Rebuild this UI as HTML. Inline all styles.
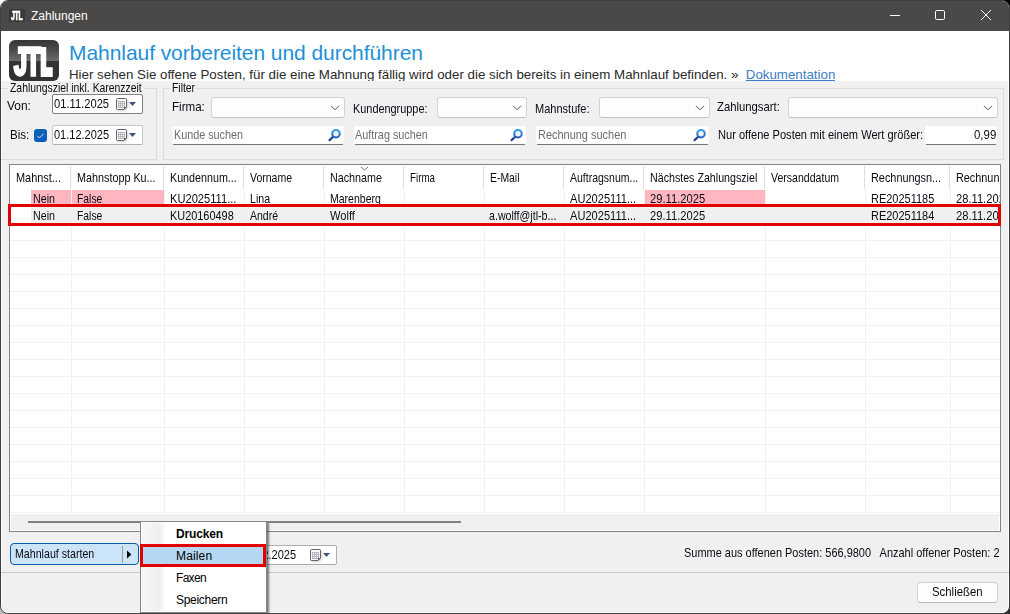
<!DOCTYPE html>
<html lang="de">
<head>
<meta charset="utf-8">
<title>Zahlungen</title>
<style>
html,body{margin:0;padding:0;}
body{width:1010px;height:614px;overflow:hidden;background:#fff;font-family:"Liberation Sans",sans-serif;font-size:11px;color:#000;position:relative;}
.a{position:absolute;white-space:nowrap;}
.corner{position:absolute;width:12px;height:12px;}
#win{position:absolute;left:0;top:0;width:1010px;height:614px;box-sizing:border-box;border:1px solid #403f3d;border-radius:8px;background:#f0f0f0;overflow:hidden;}
#inner{position:absolute;left:-1px;top:-1px;width:1010px;height:614px;}
#titlebar{left:0;top:0;width:1010px;height:31px;background:#4a4947;}
#hdr{left:1px;top:31px;width:1008px;height:50px;background:#fff;}
.s{position:absolute;white-space:nowrap;font-size:13px;line-height:15px;transform-origin:0 0;color:#0a0a14;}
.gb{position:absolute;box-sizing:border-box;border:1px solid #dcdcdc;}
.gbl{position:absolute;background:#f0f0f0;height:13px;}
.date{position:absolute;box-sizing:border-box;width:91px;height:20px;background:#fff;border:1px solid #c6c6c6;border-bottom-color:#b0b0b0;border-radius:2px;}
.combo{position:absolute;box-sizing:border-box;height:21px;background:#fdfdfd;border:1px solid #d4d4d4;border-bottom-color:#c0c0c0;border-radius:3px;}
.combo svg{position:absolute;right:4px;top:7px;}
.tb{position:absolute;box-sizing:border-box;height:19px;background:#fff;border:1px solid #fbfbfb;border-bottom:1px solid #757575;border-radius:2px;}
#grid{left:9px;top:164px;width:992px;height:368px;box-sizing:border-box;border:1px solid #7f848f;background:#fff;}
#gclip{position:absolute;left:10px;top:165px;width:990px;height:366px;overflow:hidden;}
.hs{position:absolute;width:1px;background:#dedede;}
.vs{position:absolute;width:1px;background:#f1f1f1;}
.hl{position:absolute;left:10px;width:990px;height:1px;background:#f1f1f1;}
.pink{position:absolute;background:#ffb6c1;height:16px;}
.sel{position:absolute;background:#f0f0f0;}
.red{position:absolute;box-sizing:border-box;border:3px solid #e30000;}
.mi{position:absolute;left:35px;font-size:12px;line-height:14px;white-space:nowrap;color:#000;}
</style>
</head>
<body>
<div class="corner" style="left:0;top:0;background:#fff"></div>
<div class="corner" style="right:0;top:0;background:#000"></div>
<div class="corner" style="left:0;bottom:0;background:#bdbdbd"></div>
<div class="corner" style="right:0;bottom:0;background:#2b2b2b"></div>
<div id="win"><div id="inner">
<div id="titlebar" class="a"></div>
<div class="a" style="left:9px;top:9px;width:16px;height:13px;background:#3a3937;border-radius:2px;"></div>
<div class="a" style="left:10.5px;top:8.5px;color:#fff;font-weight:bold;font-size:12.5px;line-height:14px;transform-origin:0 0;transform:scaleX(0.56);letter-spacing:-0.6px;-webkit-text-stroke:0.7px #fff;">JTL</div>
<div class="a" id="ttl" style="left:31px;top:9px;color:#fff;font-size:12px;line-height:14px;">Zahlungen</div>
<svg class="a" style="left:885px;top:5px" width="20" height="20" viewBox="0 0 20 20"><path d="M5 10.5H15" stroke="#fff" stroke-width="1" fill="none"/></svg>
<svg class="a" style="left:930px;top:5px" width="20" height="20" viewBox="0 0 20 20"><rect x="5.5" y="5.5" width="9" height="9" rx="1.2" stroke="#fff" stroke-width="1" fill="none"/></svg>
<svg class="a" style="left:976px;top:5px" width="20" height="20" viewBox="0 0 20 20"><path d="M5 5L15 15M15 5L5 15" stroke="#fff" stroke-width="1" fill="none"/></svg>
<div class="a" style="left:1px;top:31px;width:1008px;height:582px;box-sizing:border-box;border:1px solid #fbfbfb;border-top:none;border-radius:0 0 7px 7px;"></div>
<div id="hdr" class="a"></div>
<div class="a" id="logo" style="left:9px;top:40px;width:50px;height:41px;border-radius:6px;background:linear-gradient(#353535 0%,#4c4c4c 25%,#6b6b6b 51%,#343434 52%,#323232 100%);"></div>
<div class="a" style="left:13.6px;top:42.2px;color:#fff;font-weight:bold;font-size:39.2px;line-height:39.2px;transform-origin:0 0;transform:scaleX(0.6);-webkit-text-stroke:3.3px #fff;">J</div>
<div class="a" style="left:26px;top:42.2px;color:#fff;font-weight:bold;font-size:39.2px;line-height:39.2px;transform-origin:0 0;transform:scaleX(0.61);-webkit-text-stroke:3.3px #fff;">T</div>
<div class="a" style="left:41.3px;top:43.6px;color:#fff;font-weight:bold;font-size:35.3px;line-height:35.3px;transform-origin:0 0;transform:scaleX(0.5);-webkit-text-stroke:5.8px #fff;">L</div>
<div class="a" id="h1" style="left:69px;top:41px;font-size:21px;line-height:24px;color:#1e90d8;letter-spacing:-0.06px;">Mahnlauf vorbereiten und durchführen</div>
<div class="a" id="h2" style="left:69px;top:67px;height:14px;overflow:hidden;font-size:13.33px;line-height:16px;color:#2a2a2a;letter-spacing:-0.008px;">Hier sehen Sie offene Posten, für die eine Mahnung fällig wird oder die sich bereits in einem Mahnlauf befinden. »&nbsp; <span style="color:#3b7dc6;text-decoration:underline;">Dokumentation</span></div>
<div class="gb" style="left:1px;top:88px;width:156px;height:72px;border-left:none;"></div>
<div class="gbl" style="left:8px;top:81px;width:136px;"></div>
<div class="s" id="gl1" style="left:9.57px;top:80.20px;transform:scaleX(0.7997);">Zahlungsziel inkl. Karenzzeit</div>
<div class="gb" style="left:163px;top:88px;width:841px;height:72px;"></div>
<div class="gbl" style="left:170px;top:81px;width:26px;"></div>
<div class="s" id="gl2" style="left:171.67px;top:80.20px;transform:scaleX(0.7979);">Filter</div>
<div class="s" id="von" style="left:6.77px;top:98.20px;transform:scaleX(0.9169);">Von:</div>
<div class="date" id="d1" style="left:52px;top:94px;width:91px;border-color:#808080;"></div>
<div class="s" id="d1t" style="left:53.62px;top:96.20px;transform:scaleX(0.8589);">01.11.2025</div>
<svg class="a" style="left:116px;top:98px;overflow:visible;filter:drop-shadow(1px 1px 1px rgba(0,0,0,.18))" width="12" height="13" viewBox="0 0 12 13"><path d="M1.5 0.5H9.5Q10.5 0.5 10.5 1.5V9L8 11.5H1.5Q0.5 11.5 0.5 10.5V1.5Q0.5 0.5 1.5 0.5Z" fill="#f4f7fd" stroke="#6e605e" stroke-width="1"/><path d="M2 3H9V9L8 10H2Z" fill="#b3b7c3"/><path d="M3 4h1v1H3zM5 4h1v1H5zM7 4h1v1H7zM3 6h1v1H3zM5 6h1v1H5zM7 6h1v1H7zM3 8h1v1H3zM5 8h1v1H5zM7 8h1v1H7z" fill="#fff"/><path d="M8 11.5V9H10.5Z" fill="#5e504e"/></svg><svg class="a" style="left:129px;top:102px" width="7" height="4" viewBox="0 0 7 4"><path d="M0 0H7L3.5 4Z" fill="#3f5282"/></svg>
<div class="s" id="bis" style="left:9.89px;top:127.20px;transform:scaleX(0.8916);">Bis:</div>
<div class="a" style="left:34px;top:129px;width:13px;height:13px;border-radius:3px;background:#0a5fb8;"><svg width="13" height="13" viewBox="0 0 13 13" style="position:absolute;left:0;top:0"><path d="M3.3 6.9L5.4 9L9.6 4.6" stroke="#eaf1fb" stroke-width="0.9" fill="none"/></svg></div>
<div class="date" id="d2" style="left:52px;top:125px;width:91px;"></div>
<div class="s" id="d2t" style="left:53.63px;top:127.20px;transform:scaleX(0.8457);">01.12.2025</div>
<svg class="a" style="left:116px;top:129px;overflow:visible;filter:drop-shadow(1px 1px 1px rgba(0,0,0,.18))" width="12" height="13" viewBox="0 0 12 13"><path d="M1.5 0.5H9.5Q10.5 0.5 10.5 1.5V9L8 11.5H1.5Q0.5 11.5 0.5 10.5V1.5Q0.5 0.5 1.5 0.5Z" fill="#f4f7fd" stroke="#6e605e" stroke-width="1"/><path d="M2 3H9V9L8 10H2Z" fill="#b3b7c3"/><path d="M3 4h1v1H3zM5 4h1v1H5zM7 4h1v1H7zM3 6h1v1H3zM5 6h1v1H5zM7 6h1v1H7zM3 8h1v1H3zM5 8h1v1H5zM7 8h1v1H7z" fill="#fff"/><path d="M8 11.5V9H10.5Z" fill="#5e504e"/></svg><svg class="a" style="left:129px;top:133px" width="7" height="4" viewBox="0 0 7 4"><path d="M0 0H7L3.5 4Z" fill="#3f5282"/></svg>
<div class="s" id="l1" style="left:171.59px;top:99.20px;transform:scaleX(0.8908);">Firma:</div>
<div class="combo" style="left:211px;top:97px;width:134px;"><svg width="10" height="6" viewBox="0 0 10 6"><path d="M1 0.8L5 4.8L9 0.8" stroke="#555" stroke-width="1" fill="none"/></svg></div>
<div class="s" id="l2" style="left:352.64px;top:101.20px;transform:scaleX(0.8381);">Kundengruppe:</div>
<div class="combo" style="left:437px;top:97px;width:90px;"><svg width="10" height="6" viewBox="0 0 10 6"><path d="M1 0.8L5 4.8L9 0.8" stroke="#555" stroke-width="1" fill="none"/></svg></div>
<div class="s" id="l3" style="left:534.63px;top:101.20px;transform:scaleX(0.8479);">Mahnstufe:</div>
<div class="combo" style="left:599px;top:97px;width:111px;"><svg width="10" height="6" viewBox="0 0 10 6"><path d="M1 0.8L5 4.8L9 0.8" stroke="#555" stroke-width="1" fill="none"/></svg></div>
<div class="s" id="l4" style="left:717.31px;top:99.20px;transform:scaleX(0.8688);">Zahlungsart:</div>
<div class="combo" style="left:788px;top:97px;width:210px;"><svg width="10" height="6" viewBox="0 0 10 6"><path d="M1 0.8L5 4.8L9 0.8" stroke="#555" stroke-width="1" fill="none"/></svg></div>
<div class="tb" style="left:172px;top:126px;width:172px;"></div>
<div class="s" id="p1" style="left:173.94px;top:127.20px;transform:scaleX(0.8302);color:#6c6c74;">Kunde suchen</div>
<svg class="a" style="left:328px;top:129px" width="14" height="13" viewBox="0 0 14 13"><defs><linearGradient id="mg328" x1="0" y1="0" x2="0" y2="1"><stop offset="0" stop-color="#35a5e2"/><stop offset="1" stop-color="#2259bd"/></linearGradient></defs><circle cx="8" cy="4.65" r="3.75" stroke="url(#mg328)" stroke-width="2" fill="#eef2fa"/><path d="M5.2 7.7L0.9 11.7" stroke="#1c3f8c" stroke-width="2.2" stroke-linecap="butt"/></svg>
<div class="tb" style="left:354px;top:126px;width:172px;"></div>
<div class="s" id="p2" style="left:355.44px;top:127.20px;transform:scaleX(0.8326);color:#6c6c74;">Auftrag suchen</div>
<svg class="a" style="left:510px;top:129px" width="14" height="13" viewBox="0 0 14 13"><defs><linearGradient id="mg510" x1="0" y1="0" x2="0" y2="1"><stop offset="0" stop-color="#35a5e2"/><stop offset="1" stop-color="#2259bd"/></linearGradient></defs><circle cx="8" cy="4.65" r="3.75" stroke="url(#mg510)" stroke-width="2" fill="#eef2fa"/><path d="M5.2 7.7L0.9 11.7" stroke="#1c3f8c" stroke-width="2.2" stroke-linecap="butt"/></svg>
<div class="tb" style="left:536px;top:126px;width:173px;"></div>
<div class="s" id="p3" style="left:537.83px;top:127.20px;transform:scaleX(0.8428);color:#6c6c74;">Rechnung suchen</div>
<svg class="a" style="left:693px;top:129px" width="14" height="13" viewBox="0 0 14 13"><defs><linearGradient id="mg693" x1="0" y1="0" x2="0" y2="1"><stop offset="0" stop-color="#35a5e2"/><stop offset="1" stop-color="#2259bd"/></linearGradient></defs><circle cx="8" cy="4.65" r="3.75" stroke="url(#mg693)" stroke-width="2" fill="#eef2fa"/><path d="M5.2 7.7L0.9 11.7" stroke="#1c3f8c" stroke-width="2.2" stroke-linecap="butt"/></svg>
<div class="s" id="l5" style="left:717.53px;top:127.20px;transform:scaleX(0.8514);">Nur offene Posten mit einem Wert größer:</div>
<div class="tb" style="left:925px;top:126px;width:72px;"></div>
<div class="s" id="v1" style="left:973.50px;top:127.20px;transform:scaleX(0.8811);">0,99</div>
<div id="grid" class="a"></div><div id="gclip">
<div class="hs" style="left:60px;top:1px;height:23px"></div>
<div class="vs" style="left:61px;top:25px;height:323px"></div>
<div class="hs" style="left:153px;top:1px;height:23px"></div>
<div class="vs" style="left:154px;top:25px;height:323px"></div>
<div class="hs" style="left:233px;top:1px;height:23px"></div>
<div class="vs" style="left:234px;top:25px;height:323px"></div>
<div class="hs" style="left:313px;top:1px;height:23px"></div>
<div class="vs" style="left:314px;top:25px;height:323px"></div>
<div class="hs" style="left:393px;top:1px;height:23px"></div>
<div class="vs" style="left:394px;top:25px;height:323px"></div>
<div class="hs" style="left:473px;top:1px;height:23px"></div>
<div class="vs" style="left:474px;top:25px;height:323px"></div>
<div class="hs" style="left:553px;top:1px;height:23px"></div>
<div class="vs" style="left:554px;top:25px;height:323px"></div>
<div class="hs" style="left:633px;top:1px;height:23px"></div>
<div class="vs" style="left:634px;top:25px;height:323px"></div>
<div class="hs" style="left:754px;top:1px;height:23px"></div>
<div class="vs" style="left:755px;top:25px;height:323px"></div>
<div class="hs" style="left:854px;top:1px;height:23px"></div>
<div class="vs" style="left:855px;top:25px;height:323px"></div>
<div class="hs" style="left:939px;top:1px;height:23px"></div>
<div class="vs" style="left:940px;top:25px;height:323px"></div>
<div class="hl" style="left:0;top:41px;"></div>
<div class="hl" style="left:0;top:58px;"></div>
<div class="hl" style="left:0;top:75px;"></div>
<div class="hl" style="left:0;top:92px;"></div>
<div class="hl" style="left:0;top:109px;"></div>
<div class="hl" style="left:0;top:126px;"></div>
<div class="hl" style="left:0;top:143px;"></div>
<div class="hl" style="left:0;top:160px;"></div>
<div class="hl" style="left:0;top:177px;"></div>
<div class="hl" style="left:0;top:194px;"></div>
<div class="hl" style="left:0;top:211px;"></div>
<div class="hl" style="left:0;top:228px;"></div>
<div class="hl" style="left:0;top:245px;"></div>
<div class="hl" style="left:0;top:262px;"></div>
<div class="hl" style="left:0;top:279px;"></div>
<div class="hl" style="left:0;top:296px;"></div>
<div class="hl" style="left:0;top:313px;"></div>
<div class="hl" style="left:0;top:330px;"></div>
<div class="hl" style="left:0;top:347px;"></div>
<div class="pink" style="left:21px;top:25px;width:40px;"></div>
<div class="pink" style="left:62px;top:25px;width:92px;"></div>
<div class="pink" style="left:635px;top:25px;width:120px;"></div>
<div class="sel" style="left:21px;top:42px;width:969px;height:16px"></div>
<div class="s" id="th0" style="left:6.34px;top:5.20px;transform:scaleX(0.8403);">Mahnst...</div>
<div class="s" id="th1" style="left:66.54px;top:5.20px;transform:scaleX(0.8304);">Mahnstopp Ku...</div>
<div class="s" id="th2" style="left:159.55px;top:5.20px;transform:scaleX(0.8252);">Kundennum...</div>
<div class="s" id="th3" style="left:239.66px;top:5.20px;transform:scaleX(0.8083);">Vorname</div>
<div class="s" id="th4" style="left:319.85px;top:5.20px;transform:scaleX(0.8255);">Nachname</div>
<div class="s" id="th5" style="left:399.72px;top:5.20px;transform:scaleX(0.7516);">Firma</div>
<div class="s" id="th6" style="left:479.67px;top:5.20px;transform:scaleX(0.7995);">E-Mail</div>
<div class="s" id="th7" style="left:559.87px;top:5.20px;transform:scaleX(0.8075);">Auftragsnum...</div>
<div class="s" id="th8" style="left:639.65px;top:5.20px;transform:scaleX(0.8203);">Nächstes Zahlungsziel</div>
<div class="s" id="th9" style="left:760.66px;top:5.20px;transform:scaleX(0.8120);">Versanddatum</div>
<div class="s" id="th10" style="left:860.84px;top:5.20px;transform:scaleX(0.8363);">Rechnungsn...</div>
<div class="s" id="th11" style="left:945.74px;top:5.20px;transform:scaleX(0.8343);">Rechnungsdatum</div>
<svg class="a" style="left:350px;top:1px" width="9" height="5" viewBox="0 0 9 5"><path d="M1 1L4.5 4L8 1" stroke="#777" stroke-width="1" fill="none"/></svg>
<div class="s" id="r0c0" style="left:22.85px;top:26.20px;transform:scaleX(0.8223);">Nein</div>
<div class="s" id="r0c1" style="left:66.57px;top:26.20px;transform:scaleX(0.7973);">False</div>
<div class="s" id="r0c2" style="left:159.52px;top:26.20px;transform:scaleX(0.8567);">KU2025111...</div>
<div class="s" id="r0c3" style="left:239.66px;top:26.20px;transform:scaleX(0.8173);">Lina</div>
<div class="s" id="r0c4" style="left:319.86px;top:26.20px;transform:scaleX(0.8091);">Marenberg</div>
<div class="s" id="r0c7" style="left:559.82px;top:26.20px;transform:scaleX(0.8527);">AU2025111...</div>
<div class="s" id="r0c8" style="left:639.62px;top:26.20px;transform:scaleX(0.8605);">29.11.2025</div>
<div class="s" id="r0c10" style="left:860.83px;top:26.20px;transform:scaleX(0.8452);">RE20251185</div>
<div class="s" id="r0c11" style="left:945.72px;top:26.20px;transform:scaleX(0.8589);">28.11.2025</div>
<div class="s" id="r1c0" style="left:22.85px;top:43.20px;transform:scaleX(0.8223);">Nein</div>
<div class="s" id="r1c1" style="left:66.57px;top:43.20px;transform:scaleX(0.7973);">False</div>
<div class="s" id="r1c2" style="left:159.54px;top:43.20px;transform:scaleX(0.8396);">KU20160498</div>
<div class="s" id="r1c3" style="left:239.66px;top:43.20px;transform:scaleX(0.8089);">André</div>
<div class="s" id="r1c4" style="left:319.82px;top:43.20px;transform:scaleX(0.8560);">Wolff</div>
<div class="s" id="r1c6" style="left:479.36px;top:43.20px;transform:scaleX(0.8186);">a.wolff@jtl-b...</div>
<div class="s" id="r1c7" style="left:559.82px;top:43.20px;transform:scaleX(0.8527);">AU2025111...</div>
<div class="s" id="r1c8" style="left:639.62px;top:43.20px;transform:scaleX(0.8605);">29.11.2025</div>
<div class="s" id="r1c10" style="left:860.83px;top:43.20px;transform:scaleX(0.8452);">RE20251184</div>
<div class="s" id="r1c11" style="left:945.72px;top:43.20px;transform:scaleX(0.8589);">28.11.2025</div>
<div class="a" style="left:0;top:348px;width:990px;height:18px;background:#fff"></div>
<div class="a" style="left:1px;top:349px;width:988px;height:16px;background:#f0f0f0"></div>
<div class="a" style="left:18px;top:356px;width:433px;height:2px;background:#808080;"></div>
</div>
<div class="red" style="left:8px;top:204px;width:993px;height:22px;"></div>
<div class="a" style="left:1px;top:572px;width:1008px;height:1px;background:#c8c8c8"></div>
<div class="a" style="left:10px;top:543px;width:129px;height:22px;box-sizing:border-box;border:1px solid #0a5aa5;border-radius:4px;background:#cce4f7;"></div>
<div class="a" style="left:122px;top:546px;width:1px;height:17px;background:#a3a09c"></div>
<svg class="a" style="left:127px;top:550px" width="5" height="9" viewBox="0 0 5 9"><path d="M0 0.6L4.4 4.5L0 8.4Z" fill="#000"/></svg>
<div class="s" id="btn1" style="left:15.45px;top:546.20px;transform:scaleX(0.8187);">Mahnlauf starten</div>
<div class="date" id="d3" style="left:239px;top:545px;width:98px;border-color:#adadad;"></div>
<div class="s" id="d3t" style="left:240.63px;top:547.20px;transform:scaleX(0.8457);">01.12.2025</div>
<svg class="a" style="left:310px;top:549px;overflow:visible;filter:drop-shadow(1px 1px 1px rgba(0,0,0,.18))" width="12" height="13" viewBox="0 0 12 13"><path d="M1.5 0.5H9.5Q10.5 0.5 10.5 1.5V9L8 11.5H1.5Q0.5 11.5 0.5 10.5V1.5Q0.5 0.5 1.5 0.5Z" fill="#f4f7fd" stroke="#6e605e" stroke-width="1"/><path d="M2 3H9V9L8 10H2Z" fill="#b3b7c3"/><path d="M3 4h1v1H3zM5 4h1v1H5zM7 4h1v1H7zM3 6h1v1H3zM5 6h1v1H5zM7 6h1v1H7zM3 8h1v1H3zM5 8h1v1H5zM7 8h1v1H7z" fill="#fff"/><path d="M8 11.5V9H10.5Z" fill="#5e504e"/></svg><svg class="a" style="left:323px;top:553px" width="7" height="4" viewBox="0 0 7 4"><path d="M0 0H7L3.5 4Z" fill="#3f5282"/></svg>
<div class="s" id="status" style="left:684.23px;top:545.20px;transform:scaleX(0.8439);">Summe aus offenen Posten: 566,9800&nbsp;&nbsp; Anzahl offener Posten: 2</div>
<div class="a" style="left:917px;top:582px;width:81px;height:21px;box-sizing:border-box;border:1px solid #d0d0d0;border-bottom-color:#bcbcbc;border-radius:4px;background:#fdfdfd;"></div>
<div class="s" id="close" style="left:932.20px;top:584.20px;transform:scaleX(0.8751);">Schließen</div>
<div class="a" id="menu" style="left:140px;top:521px;width:127px;height:92px;box-sizing:border-box;border:1px solid #858585;background:#fff;box-shadow:2px 2px 2px rgba(0,0,0,.5);"><div class="a" style="left:1px;top:1px;width:24px;height:88px;background:linear-gradient(90deg,#f7f7f7,#efefef 75%,#fff)"></div><div class="a" style="left:1px;top:23px;width:124px;height:22px;background:#b5d7f3"></div><div class="mi" style="top:5px;font-weight:bold;letter-spacing:-0.15px">Drucken</div><div class="mi" style="top:27px;letter-spacing:0.15px">Mailen</div><div class="mi" style="top:49px;letter-spacing:-0.7px">Faxen</div><div class="mi" style="top:71px;letter-spacing:-0.3px">Speichern</div></div>
<div class="red" style="left:140px;top:544px;width:126px;height:23px;"></div>
</div></div>
</body>
</html>
